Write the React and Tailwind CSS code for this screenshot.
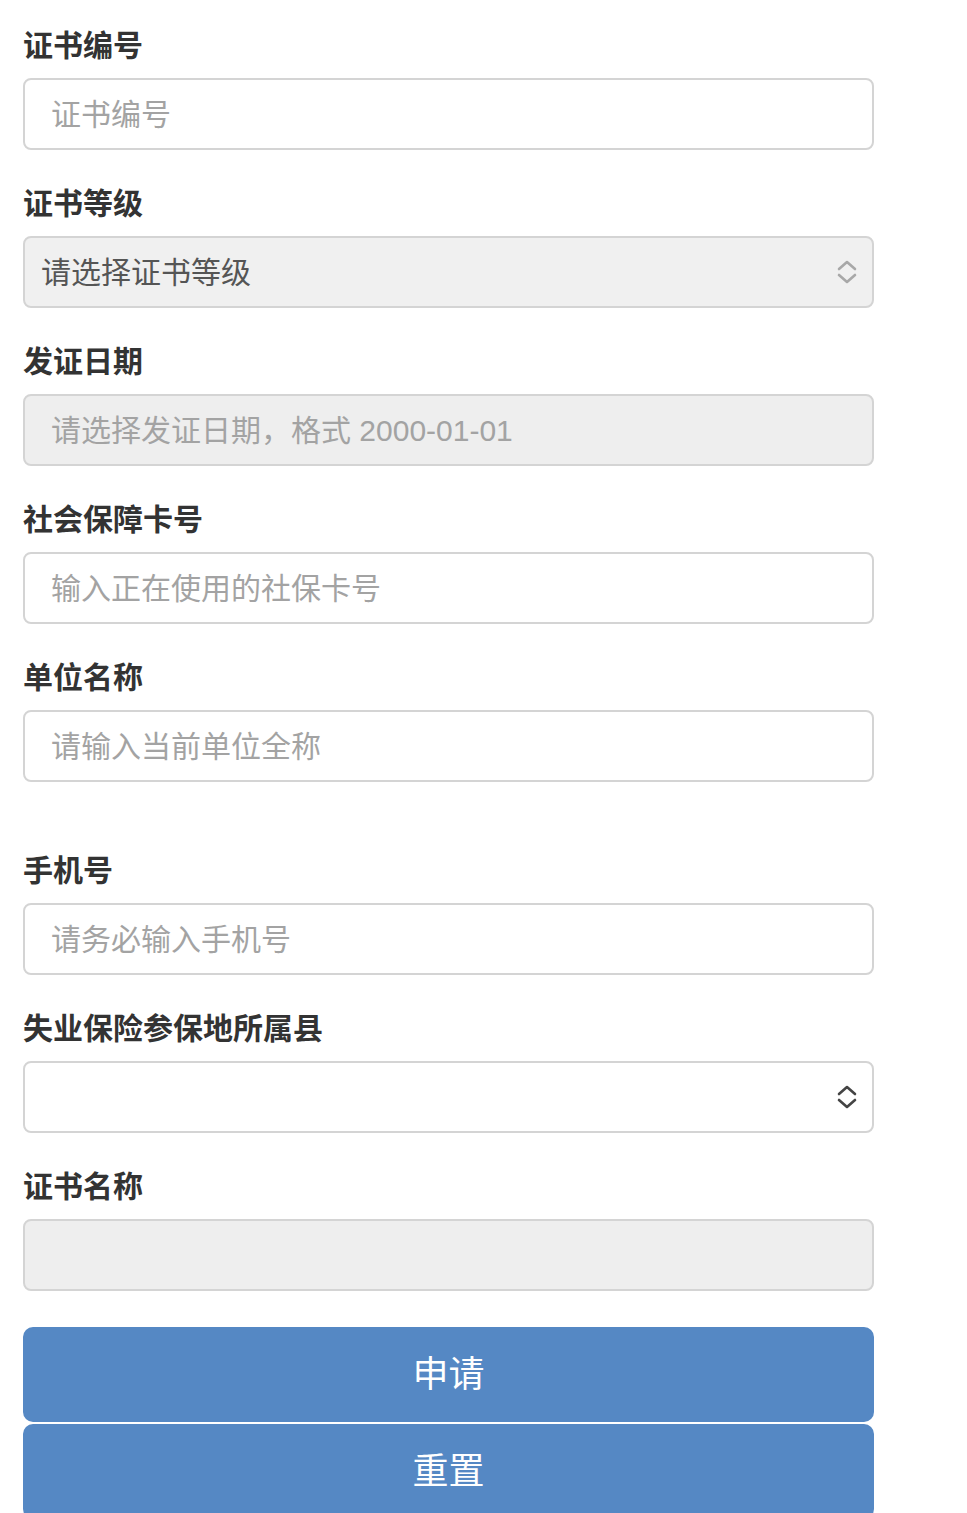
import React from "react";

const font = { fontFamily: '"Liberation Sans", "Noto Sans CJK SC", sans-serif' };

function Chevron({ color }) {
  return (
    <svg width="22" height="26" viewBox="0 0 22 26" fill="none" stroke={color} strokeWidth="2.6" strokeLinecap="round" strokeLinejoin="round">
      <path d="M3 10 L11 3 L19 10" />
      <path d="M3 16 L11 23 L19 16" />
    </svg>
  );
}

function Label({ children }) {
  return (
    <div className="text-[30px] leading-[42px] font-bold text-[#333] mb-[11px]">{children}</div>
  );
}

function Field({ label, placeholder, disabled }) {
  return (
    <div className="mb-[33px]">
      <Label>{label}</Label>
      <div
        className={`h-[72px] w-[851px] rounded-[8px] border-2 border-[#d4d4d4] flex items-center pl-[26px] text-[30px] text-[#a3a3a3] ${disabled ? "bg-[#eeeeee]" : "bg-white"}`}
      >
        {placeholder}
      </div>
    </div>
  );
}

function Select({ label, value, gray }) {
  return (
    <div className="mb-[33px]">
      <Label>{label}</Label>
      <div
        className={`h-[72px] w-[851px] rounded-[8px] border-2 border-[#d4d4d4] flex items-center justify-between pl-[16px] pr-[14px] text-[30px] text-[#555] ${gray ? "bg-[#f0f0f0]" : "bg-white"}`}
      >
        <span>{value}</span>
        <Chevron color={gray ? "#a8a8a8" : "#444"} />
      </div>
    </div>
  );
}

export default function App() {
  return (
    <div className="bg-white min-h-[1513px] pl-[23px] pt-[25px] overflow-hidden" style={font}>
      <Field label="证书编号" placeholder="证书编号" />
      <Select label="证书等级" value="请选择证书等级" gray />
      <Field label="发证日期" placeholder="请选择发证日期，格式 2000-01-01" disabled />
      <Field label="社会保障卡号" placeholder="输入正在使用的社保卡号" />
      <Field label="单位名称" placeholder="请输入当前单位全称" />
      <div className="h-[35px]" />
      <Field label="手机号" placeholder="请务必输入手机号" />
      <Select label="失业保险参保地所属县" value="" />
      <Field label="证书名称" placeholder="" disabled />
      <div className="pt-[3px] w-[851px]">
        <button className="w-full h-[95px] rounded-[10px] bg-[#5588c4] text-white text-[36px] flex items-center justify-center">
          申请
        </button>
        <button className="w-full h-[95px] mt-[2px] rounded-[10px] bg-[#5588c4] text-white text-[36px] flex items-center justify-center">
          重置
        </button>
      </div>
    </div>
  );
}
